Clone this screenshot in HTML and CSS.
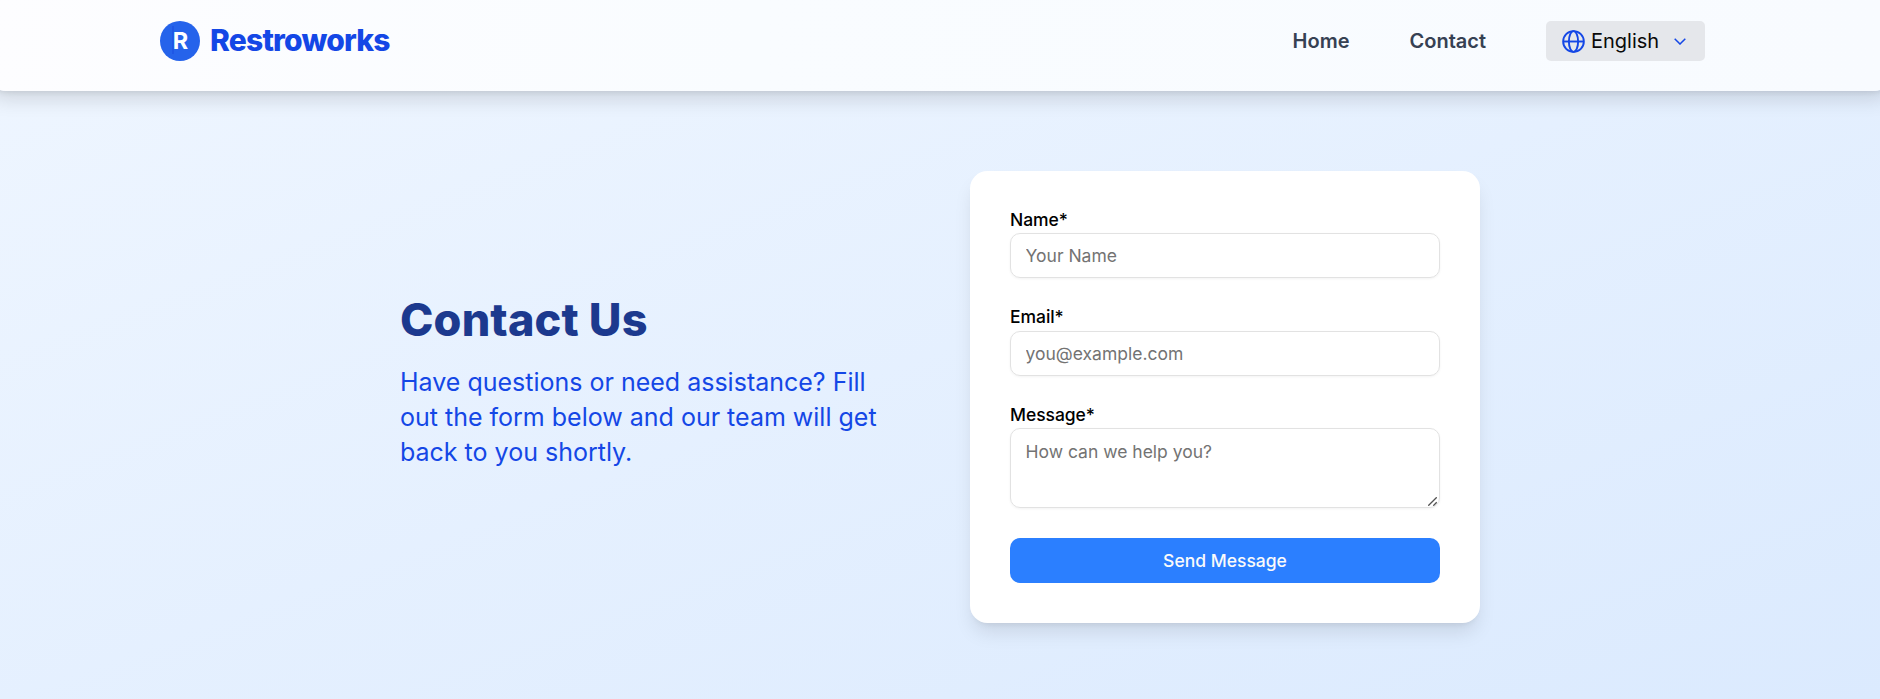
FILE: index.html
```html
<!DOCTYPE html>
<html lang="en">
<head>
<meta charset="utf-8">
<title>Contact Us - Restroworks</title>
<link rel="stylesheet" href="styles.css">
</head>
<body class="page">
<header class="header">
  <a class="brand"><span class="brand-mark">R</span><span class="brand-name">Restroworks</span></a>
  <nav class="nav">
    <a class="nav-link">Home</a>
    <a class="nav-link">Contact</a>
    <button class="language" type="button">
      <svg class="globe" viewBox="0 0 24 24" fill="none" stroke="currentColor" stroke-width="2"><circle cx="12" cy="12" r="10.8"/><ellipse cx="12" cy="12" rx="4.8" ry="10.8"/><path d="M1.2 12h21.6"/></svg>
      <span>English</span>
      <svg class="chevron" viewBox="0 0 12 7" fill="none" stroke="currentColor" stroke-width="1.5"><path d="M.7.7 6 6 11.3.7"/></svg>
    </button>
  </nav>
</header>
<main class="contact">
  <section class="intro">
    <h1 class="title">Contact Us</h1>
    <p class="lead">Have questions or need assistance? Fill out the form below and our team will get back to you shortly.</p>
  </section>
  <form class="card">
    <div class="field"><label class="label" for="name">Name*</label><input class="control" id="name" placeholder="Your Name"></div>
    <div class="field"><label class="label" for="email">Email*</label><input class="control" id="email" type="email" placeholder="you@example.com"></div>
    <div class="field"><label class="label" for="message">Message*</label><textarea class="control message" id="message" placeholder="How can we help you?"></textarea><svg class="grip" viewBox="0 0 9 9" fill="none" stroke="#505050" stroke-width="1.3"><path d="M.3 8.7 8.7.3M5.3 8.7l3.4-3.4"/></svg></div>
    <button class="send" type="button">Send Message</button>
  </form>
</main>
</body>
</html>
```
FILE: styles.css
```css
* { box-sizing: border-box; }
.page {
  margin: 0;
  height: 699px;
  overflow: hidden;
  font-family: Inter, "Liberation Sans", sans-serif;
  background: linear-gradient(to bottom right, #eff6ff, #dbeafe);
}
.header {
  display: flex;
  justify-content: space-between;
  align-items: flex-start;
  height: 91px;
  margin: 0 -14px;
  padding: 21px 189px 0 174px;
  border-radius: 0 0 20px 20px;
  background: linear-gradient(to right, #fdfdff, #f9fcff 40%, #f8fbff);
  box-shadow: 0 12.5px 18.75px -3.75px rgba(0, 0, 0, .12), 0 5px 7.5px -5px rgba(0, 0, 0, .12);
}
.brand { display: flex; align-items: center; gap: 10px; height: 40px; }
.brand-mark {
  display: flex;
  align-items: center;
  justify-content: center;
  width: 40px;
  height: 40px;
  padding: 0 0 1px 1px;
  border-radius: 50%;
  background: linear-gradient(#1f57e6, #1f57e6) 12px 5px / 2px 28px no-repeat #2563eb;
  color: #fff;
  font-size: 23.5px;
  font-weight: 700;
}
.brand-name { padding-bottom: 2px; color: #1447e6; font-size: 30px; font-weight: 800; letter-spacing: -.78px; }
.nav { display: flex; align-items: center; gap: 60px; height: 40px; }
.nav-link { color: #364153; font-size: 20px; font-weight: 600; }
.language {
  display: flex;
  align-items: center;
  width: 159px;
  height: 40px;
  padding: 0 16px;
  border: 0;
  border-radius: 5px;
  background: #e5e7eb;
  color: #0a0a0a;
  font: 400 20px Inter, sans-serif;
}
.globe { width: 23px; height: 23px; margin-right: 6px; color: #1447e6; }
.chevron { width: 12px; height: 7px; margin-left: auto; margin-right: 3px; color: #1447e6; }
.contact {
  display: grid;
  grid-template-columns: 510px 510px;
  gap: 60px;
  justify-content: center;
  align-items: center;
  padding-top: 80px;
}
.intro { padding-bottom: 30px; }
.title { margin: 0 0 20px; color: #1c398e; font-size: 45px; line-height: 50px; font-weight: 800; letter-spacing: .15px; }
.lead { margin: 0; color: #1447e6; font-size: 25px; line-height: 35px; }
.card {
  display: flex;
  flex-direction: column;
  height: 452px;
  padding: 40px;
  border-radius: 17.5px;
  background: #fff;
  box-shadow: 0 12.5px 18.75px -3.75px rgba(0, 0, 0, .1), 0 5px 7.5px -5px rgba(0, 0, 0, .1);
}
.field { position: relative; display: flex; flex-direction: column; margin-bottom: 30px; }
.label { height: 22.4px; line-height: 18px; color: #000; font-size: 17.5px; font-weight: 500; letter-spacing: -.05px; }
.control {
  width: 100%;
  height: 45px;
  padding: 5px 14.5px;
  border: 1px solid #e2e2e2;
  border-radius: 10px;
  background: transparent;
  box-shadow: 0 1px 2.5px rgba(0, 0, 0, .05);
  font: 400 17.5px/25px Inter, sans-serif;
  outline: 0;
}
.control::placeholder { color: #737373; }
.message { height: 80px; padding-top: 10px; resize: none; }
.grip { position: absolute; right: 3px; bottom: 2px; width: 9px; height: 9px; }
.send {
  height: 45px;
  border: 0;
  border-radius: 10px;
  background: #2b7fff;
  color: #fafafa;
  font: 500 17.5px Inter, sans-serif;
}
```
